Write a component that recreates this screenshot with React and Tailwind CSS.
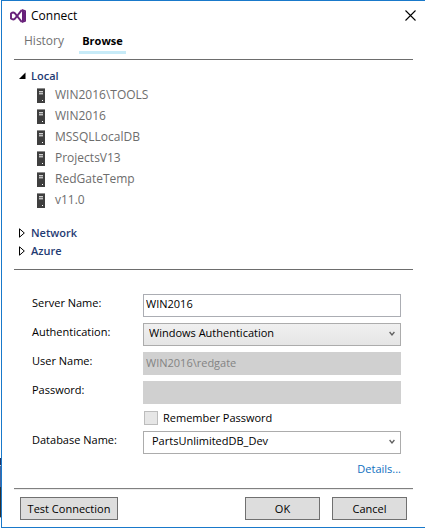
import React, { useState } from "react";

const servers = ["WIN2016\\TOOLS", "WIN2016", "MSSQLLocalDB", "ProjectsV13", "RedGateTemp", "v11.0"];

function StudioLogo() {
  return (
    <svg className="h-4 w-4 shrink-0" viewBox="0 0 16 16" fill="none" stroke="#68217a" strokeLinejoin="round" aria-hidden="true">
      <path strokeWidth="1.900" d="M11.700 2.200 4.800 10.800Q3.200 12.200 1 10.600V5.400Q3.200 3.800 4.800 5.200L11.700 13.800" />
      <path strokeWidth="1.600" d="M11.700 1.800 15.200 3v10L11.700 14.200" />
      <path strokeWidth="1.600" d="M12.800 2.200v11.600" />
      <path fill="#68217a" stroke="none" d="M12.500 2.500 15 3.500v9l-2.500 1Z" />
    </svg>
  );
}

function ServerIcon() {
  return (
    <svg className="h-[15px] w-2 shrink-0" viewBox="0 0 8 15" shapeRendering="crispEdges" aria-hidden="true">
      <rect width="8" height="15" fill="#3f3f3f" />
      <rect width="8" height="1" fill="#8c8c8c" />
      <rect x="2" y="3" width="4" height="1" fill="#d0d0d0" />
      <rect x="2" y="4" width="4" height="1" fill="#777777" />
      <rect x="2" y="5" width="4" height="1" fill="#c0c0c0" />
      <rect x="2" y="6" width="4" height="1" fill="#777777" />
      <rect x="5" y="12" width="1" height="1" fill="#ffffff" />
    </svg>
  );
}

function TreeHeading({ label, open }) {
  return (
    <button type="button" aria-expanded={open} className="flex h-[18px] w-full items-center text-left text-[11px] font-semibold text-[#1f3b73]">
      <svg className="mr-1 h-[10px] w-[9px] shrink-0" viewBox="0 0 9 10" aria-hidden="true">
        {open ? <path d="M7.500 1.500V8H1Z" fill="#000" /> : <path d="M1.500 .8 6.300 5 1.500 9.200Z" fill="#fff" stroke="#000" />}
      </svg>
      {label}
    </button>
  );
}

function Chevron() {
  return (
    <svg className="pointer-events-none absolute top-2 right-[6px] h-[6px] w-[6px]" viewBox="0 0 6 6" fill="none" stroke="#606060" strokeWidth="1.300" aria-hidden="true">
      <path d="M.6 1 3 4 5.400 1" />
    </svg>
  );
}

function Field({ id, label, children }) {
  return (
    <div className="flex h-[23px]">
      <label htmlFor={id} className="w-[111px] shrink-0 leading-[18px]">{label}</label>
      <div className="relative min-w-0 flex-1">{children}</div>
    </div>
  );
}

function DialogButton({ width, children }) {
  return (
    <button type="button" className={`h-[23px] border border-[#707070] bg-[#dddddd] ${width}`}>{children}</button>
  );
}

export default function App() {
  const [server, setServer] = useState("WIN2016");
  return (
    <div className="flex bg-white font-['Open_Sans','Noto_Sans',sans-serif] text-[12px] leading-4 text-black">
      <div className="flex w-px shrink-0 flex-col justify-end pb-[10px]">
        <div className="h-[7px] bg-[#1f3566]" />
        <div className="h-px bg-[#c8ccd4]" />
        <div className="h-[21px] bg-[#4465a0]" />
        <div className="h-[30px] bg-[#303030]" />
        <div className="h-px bg-[#b0b0b0]" />
      </div>
      <main className="min-w-0 flex-1 border-y border-l border-[#1979ca] px-3">
        <header className="flex h-[29px] items-center">
          <span className="-ml-1 flex items-center gap-[5px]">
            <StudioLogo />
            <h1>Connect</h1>
          </span>
          <button type="button" aria-label="Close" className="-mr-[3px] ml-auto">
            <svg className="h-[11px] w-[11px]" viewBox="0 0 11 11" stroke="#000" strokeWidth="1.100" aria-hidden="true">
              <path d="M.5.5l10 10M10.500.5l-10 10" />
            </svg>
          </button>
        </header>

        <nav className="mb-[5px] flex h-6 gap-3 pl-[7px] text-[11px]">
          <button type="button" className="h-6 border-b-[3px] border-transparent px-[3px] text-[12px] text-[#717171]">History</button>
          <button type="button" className="h-6 w-[47px] border-b-[3px] border-[#c7ebf8] font-bold">Browse</button>
        </nav>

        <section className="border-y border-[#6d6d6d] pt-[7px] pb-[9px] pl-1">
          <TreeHeading label="Local" open />
          <ul className="mb-[13px] pl-[19px]">
            {servers.map((name) => (
              <li key={name} className="flex h-[21px] items-center gap-[10px] text-[#6d6d6d]">
                <ServerIcon />
                <span className="pb-[2px]">{name}</span>
              </li>
            ))}
          </ul>
          <TreeHeading label="Network" open={false} />
          <TreeHeading label="Azure" open={false} />
        </section>

        <form className="pt-6 text-[11px]" onSubmit={(e) => e.preventDefault()}>
          <div className="flex flex-col gap-[6px] pr-3 pl-[18px]">
            <Field id="server" label="Server Name:">
              <input id="server" value={server} onChange={(e) => setServer(e.target.value)} className="block h-[23px] w-full border border-[#abadb3] bg-white px-[2px] pb-1" />
            </Field>
            <Field id="auth" label="Authentication:">
              <select id="auth" className="block h-[23px] w-full appearance-none border border-[#acacac] bg-linear-to-b from-[#f0f0f0] to-[#e5e5e5] pb-1 pl-[5px]">
                <option>Windows Authentication</option>
                <option>SQL Server Authentication</option>
              </select>
              <Chevron />
            </Field>
            <Field id="user" label="User Name:">
              <input id="user" disabled value="WIN2016\redgate" className="block h-[23px] w-full bg-[#d0d0d0] px-[3px] pb-[2px] text-[#838383]" />
            </Field>
            <Field id="password" label="Password:">
              <input id="password" type="password" disabled className="block h-[23px] w-full bg-[#d0d0d0] px-[3px]" />
            </Field>
          </div>
          <div className="flex h-[27px] items-center gap-[5px] pl-[130px]">
            <input id="remember" type="checkbox" disabled className="h-[14px] w-[14px] appearance-none border border-[#bcbcbc] bg-[#e6e6e6]" />
            <label htmlFor="remember">Remember Password</label>
          </div>
          <div className="pr-3 pl-[18px]">
            <Field id="database" label="Database Name:">
              <select id="database" className="block h-[23px] w-full appearance-none border border-[#acacac] bg-white pb-1 pl-2">
                <option>PartsUnlimitedDB_Dev</option>
              </select>
              <Chevron />
            </Field>
          </div>
          <div className="mt-[6px] mb-[10px] flex h-[18px] items-center justify-end pr-3">
            <a href="#details" className="text-[#0e70c0]">Details...</a>
          </div>
          <div className="border-t border-[#808080]">
            <div className="flex gap-3 border-t border-[#ececec] px-[6px] py-[7px]">
              <DialogButton width="w-[98px]">Test Connection</DialogButton>
              <span className="flex-1" />
              <DialogButton width="w-[75px]">OK</DialogButton>
              <DialogButton width="w-[75px]">Cancel</DialogButton>
            </div>
          </div>
        </form>
      </main>
    </div>
  );
}
